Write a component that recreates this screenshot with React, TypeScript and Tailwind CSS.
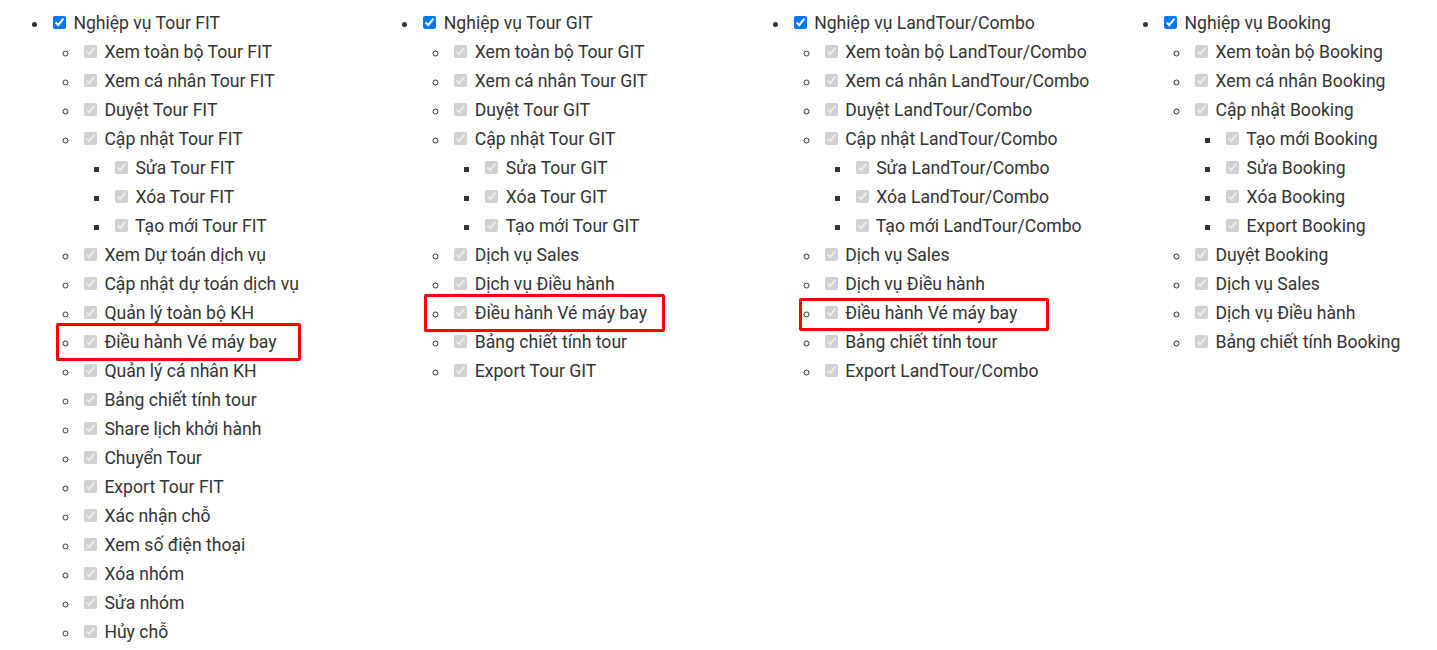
import React from "react";

type Node = { label: string; children?: Node[] };

const groups: Node[] = [
  {
    label: "Nghiệp vụ Tour FIT",
    children: [
      { label: "Xem toàn bộ Tour FIT" },
      { label: "Xem cá nhân Tour FIT" },
      { label: "Duyệt Tour FIT" },
      {
        label: "Cập nhật Tour FIT",
        children: [{ label: "Sửa Tour FIT" }, { label: "Xóa Tour FIT" }, { label: "Tạo mới Tour FIT" }],
      },
      { label: "Xem Dự toán dịch vụ" },
      { label: "Cập nhật dự toán dịch vụ" },
      { label: "Quản lý toàn bộ KH" },
      { label: "Điều hành Vé máy bay" },
      { label: "Quản lý cá nhân KH" },
      { label: "Bảng chiết tính tour" },
      { label: "Share lịch khởi hành" },
      { label: "Chuyển Tour" },
      { label: "Export Tour FIT" },
      { label: "Xác nhận chỗ" },
      { label: "Xem số điện thoại" },
      { label: "Xóa nhóm" },
      { label: "Sửa nhóm" },
      { label: "Hủy chỗ" },
    ],
  },
  {
    label: "Nghiệp vụ Tour GIT",
    children: [
      { label: "Xem toàn bộ Tour GIT" },
      { label: "Xem cá nhân Tour GIT" },
      { label: "Duyệt Tour GIT" },
      {
        label: "Cập nhật Tour GIT",
        children: [{ label: "Sửa Tour GIT" }, { label: "Xóa Tour GIT" }, { label: "Tạo mới Tour GIT" }],
      },
      { label: "Dịch vụ Sales" },
      { label: "Dịch vụ Điều hành" },
      { label: "Điều hành Vé máy bay" },
      { label: "Bảng chiết tính tour" },
      { label: "Export Tour GIT" },
    ],
  },
  {
    label: "Nghiệp vụ LandTour/Combo",
    children: [
      { label: "Xem toàn bộ LandTour/Combo" },
      { label: "Xem cá nhân LandTour/Combo" },
      { label: "Duyệt LandTour/Combo" },
      {
        label: "Cập nhật LandTour/Combo",
        children: [
          { label: "Sửa LandTour/Combo" },
          { label: "Xóa LandTour/Combo" },
          { label: "Tạo mới LandTour/Combo" },
        ],
      },
      { label: "Dịch vụ Sales" },
      { label: "Dịch vụ Điều hành" },
      { label: "Điều hành Vé máy bay" },
      { label: "Bảng chiết tính tour" },
      { label: "Export LandTour/Combo" },
    ],
  },
  {
    label: "Nghiệp vụ Booking",
    children: [
      { label: "Xem toàn bộ Booking" },
      { label: "Xem cá nhân Booking" },
      {
        label: "Cập nhật Booking",
        children: [
          { label: "Tạo mới Booking" },
          { label: "Sửa Booking" },
          { label: "Xóa Booking" },
          { label: "Export Booking" },
        ],
      },
      { label: "Duyệt Booking" },
      { label: "Dịch vụ Sales" },
      { label: "Dịch vụ Điều hành" },
      { label: "Bảng chiết tính Booking" },
    ],
  },
];

const listStyles = ["list-disc", "list-[circle]", "list-[square]"];

function Tree({ nodes, depth }: { nodes: Node[]; depth: number }) {
  return (
    <ul className={`${listStyles[depth]} pl-[31px]`}>
      {nodes.map((n, i) => (
        <li key={i}>
          <label>
            <input
              type="checkbox"
              checked
              readOnly
              disabled={depth > 0}
              className="mt-[3px] mr-[3px] mb-[3px] ml-[4px]"
            />{" "}
            {n.label}
          </label>
          {n.children && <Tree nodes={n.children} depth={depth + 1} />}
        </li>
      ))}
    </ul>
  );
}

export default function App() {
  return (
    <div
      className="relative min-h-screen bg-white text-[17.6px] leading-[29px] text-[#333]"
      style={{ fontFamily: "Roboto, 'Noto Sans', sans-serif" }}
    >
      <div className="grid grid-cols-[repeat(4,370.4px)] pl-[18px] pt-[9px]">
        {groups.map((g, i) => (
          <Tree key={i} nodes={[g]} depth={0} />
        ))}
      </div>

      {/* annotation boxes */}
      <div className="absolute left-[56px] top-[323px] w-[245px] h-[38px] border-[3px] border-[#f00] rounded-[2px]" />
      <div className="absolute left-[424px] top-[294px] w-[241px] h-[38px] border-[3px] border-[#f00] rounded-[2px]" />
      <div className="absolute left-[799px] top-[298px] w-[250px] h-[33px] border-[3px] border-[#f00] rounded-[2px]" />
    </div>
  );
}
